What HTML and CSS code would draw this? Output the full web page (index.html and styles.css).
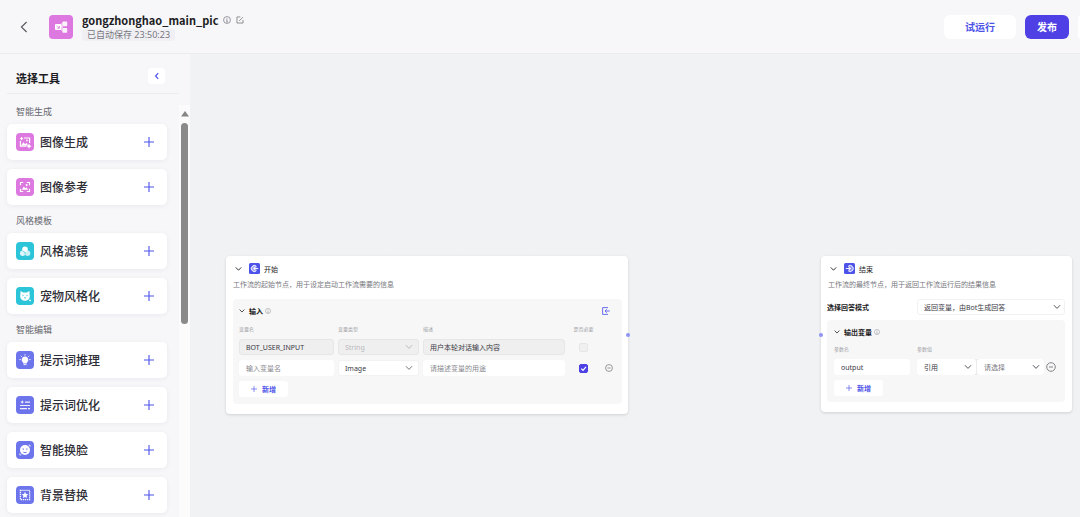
FILE: index.html
```html
<!DOCTYPE html>
<html lang="zh-CN">
<head>
<meta charset="utf-8">
<title>gongzhonghao_main_pic</title>
<link rel="stylesheet" href="styles.css">
</head>
<body>
<svg class="defs" aria-hidden="true">
  <symbol id="chevron" viewBox="0 0 8 8"><path d="M1.2 2.5 4 5.4 6.8 2.5" fill="none" stroke="currentColor" stroke-width="1" stroke-linecap="round" stroke-linejoin="round"/></symbol>
  <symbol id="plus" viewBox="0 0 10 10"><path d="M5 0v10M0 5h10" fill="none" stroke="currentColor" stroke-width="1.1"/></symbol>
  <symbol id="info" viewBox="0 0 10 10"><circle cx="5" cy="5" r="4.3" fill="none" stroke="currentColor" stroke-width=".9"/><path d="M5 4.4v3M4.2 4.5H5M4 7.4h2" fill="none" stroke="currentColor" stroke-width=".9"/><circle cx="5" cy="2.8" r=".6" fill="currentColor"/></symbol>
  <symbol id="minus" viewBox="0 0 10 10"><circle cx="5" cy="5" r="4.3" fill="none" stroke="currentColor" stroke-width=".9"/><path d="M3 5h4" stroke="currentColor" stroke-width=".9"/></symbol>
</svg>

<header class="topbar">
  <button class="back" aria-label="返回"><svg viewBox="0 0 8 12"><path d="M6.6 1 1.4 6l5.2 5" fill="none" stroke="currentColor" stroke-width="1.1"/></svg></button>
  <svg class="logo" viewBox="0 0 24 24"><rect width="24" height="24" rx="4" fill="#dc78df"/><path d="M10 12h4M13 8v8" stroke="#fff" stroke-width=".9" opacity=".8"/><rect x="6" y="9" width="6.4" height="6" rx=".8" fill="#fff"/><rect x="13.4" y="6.4" width="4.8" height="4.8" rx=".8" fill="#fff" opacity=".9"/><rect x="13.4" y="13" width="4.8" height="4.8" rx=".8" fill="#fff" opacity=".9"/><path d="m7.8 10.6 2.4 2.4M10.4 11v2.3H8.2" fill="none" stroke="#dc78df" stroke-width=".8"/></svg>
  <div class="heading">
    <div class="heading-row">
      <h1>gongzhonghao_main_pic</h1>
      <svg class="heading-icon"><use href="#info"/></svg>
      <svg class="heading-icon" viewBox="0 0 10 10"><path d="M5.5 1.2H1.2v7.6h7.6V5M4 6.200l4.800-4.800" fill="none" stroke="currentColor" stroke-width="1"/></svg>
    </div>
    <span class="saved">已自动保存 23:50:23</span>
  </div>
  <div class="actions">
    <button class="btn btn-light">试运行</button>
    <button class="btn btn-primary">发布</button>
    <span class="next-action"></span>
  </div>
</header>

<div class="workspace">
  <aside class="sidebar">
    <div class="sidebar-head">
      <h2>选择工具</h2>
      <button class="collapse" aria-label="收起"><svg viewBox="0 0 8 8"><path d="M5.2 1.2 2.6 4l2.6 2.8" fill="none" stroke="currentColor" stroke-width="1.2"/></svg></button>
    </div>
    <div class="sidebar-body">
      <div class="tools">
        <h3>智能生成</h3>
        <ul>
          <li><svg class="tool-icon pink" viewBox="0 0 18 18"><path d="M8 5h5.6v5M4.4 8v5.2h5.8" fill="none" stroke="#fff" stroke-width="1.2"/><path d="m5 12.600 2.400-3.400 1.800 2 1.600-1.400 1 2.800z" fill="#fff"/><path d="m5.6 3.600.7 1.300 1.300.7-1.300.7-.7 1.300-.7-1.300-1.300-.7 1.300-.7zM13 10.600l.9 1.700 1.700.9-1.700.9-.9 1.700-.9-1.700-1.700-.9 1.700-.9z" fill="#fff"/><circle cx="11" cy="7.400" r=".9" fill="#fff"/></svg><span>图像生成</span><button aria-label="添加图像生成"><svg><use href="#plus"/></svg></button></li>
          <li><svg class="tool-icon pink" viewBox="0 0 18 18"><path d="M4.500 7.200V4.500h2.700M10.800 4.500h2.700v2.700M13.500 10.800v2.700h-2.700M7.200 13.500H4.500v-2.700" fill="none" stroke="#fff" stroke-width="1.200"/><path d="m5.800 11.800 2-3.200 1.500 1.600 1.200-1 1.700 2.600z" fill="#fff"/><circle cx="10.600" cy="7" r="1" fill="#fff"/></svg><span>图像参考</span><button aria-label="添加图像参考"><svg><use href="#plus"/></svg></button></li>
        </ul>
        <h3>风格模板</h3>
        <ul>
          <li><svg class="tool-icon cyan" viewBox="0 0 18 18"><circle cx="9" cy="7.200" r="2.800" fill="#fff"/><circle cx="6.700" cy="11.300" r="2.700" fill="#fff" opacity=".85"/><circle cx="11.600" cy="11.300" r="2.700" fill="#fff" opacity=".75"/><path d="m6.600 9.200 2.600 1.200-.2 2" fill="none" stroke="#2bc4d8" stroke-width=".7"/></svg><span>风格滤镜</span><button aria-label="添加风格滤镜"><svg><use href="#plus"/></svg></button></li>
          <li><svg class="tool-icon cyan" viewBox="0 0 18 18"><path d="M4.600 4l2.600 1.400h3.600L13.400 4l.4 5.500c0 2.600-2 4.200-4.800 4.200s-4.800-1.600-4.800-4.200z" fill="#fff"/><path d="M7 7.800v1.400M11 7.800v1.400M8 11.200l1-.7 1 .7" fill="none" stroke="#2bc4d8" stroke-width=".9"/><circle cx="14" cy="13.300" r=".9" fill="#fff"/></svg><span>宠物风格化</span><button aria-label="添加宠物风格化"><svg><use href="#plus"/></svg></button></li>
        </ul>
        <h3>智能编辑</h3>
        <ul>
          <li><svg class="tool-icon violet" viewBox="0 0 18 18"><path d="M9 5.400a3.300 3.300 0 0 1 1.900 6v1.200H7.100v-1.200A3.300 3.300 0 0 1 9 5.400z" fill="#fff"/><path d="M7.600 13.600h2.800M9 3.200v1.400M4.800 4.800l1 1M13.200 4.800l-1 1M3.400 8.600h1.400M13.200 8.600h1.400" stroke="#fff" stroke-width=".9"/></svg><span>提示词推理</span><button aria-label="添加提示词推理"><svg><use href="#plus"/></svg></button></li>
          <li><svg class="tool-icon violet" viewBox="0 0 18 18"><path d="M9 6.200h5M4 9.500h10M4 12.700h7M12 12.700h2" stroke="#fff" stroke-width="1.200" opacity=".9"/><path d="m6.200 4.200.6 1.200 1.300.6-1.300.6-.6 1.300-.6-1.300L4.300 6l1.300-.6z" fill="#fff"/></svg><span>提示词优化</span><button aria-label="添加提示词优化"><svg><use href="#plus"/></svg></button></li>
          <li><svg class="tool-icon violet" viewBox="0 0 18 18"><circle cx="9" cy="9" r="5" fill="#fff"/><path d="M7.200 7.300v1.500M10.900 7.300v1.500M7.400 11.200q1.600 1.100 3.200 0" fill="none" stroke="#6d75ec" stroke-width="1"/><path d="M12.600 4.200h1.500v1.500M3.800 12.400v1.500h1.500" fill="none" stroke="#fff" stroke-width=".8"/></svg><span>智能换脸</span><button aria-label="添加智能换脸"><svg><use href="#plus"/></svg></button></li>
          <li><svg class="tool-icon violet" viewBox="0 0 18 18"><rect x="4.400" y="4.400" width="9.200" height="9.200" fill="none" stroke="#fff" stroke-width="1.300" stroke-dasharray="1.200 .8"/><path d="m9 5.800 1 2.100 2.300.3-1.700 1.600.4 2.300-2-1.100-2 1.100.4-2.300-1.700-1.600L8 7.900z" fill="#fff"/></svg><span>背景替换</span><button aria-label="添加背景替换"><svg><use href="#plus"/></svg></button></li>
        </ul>
      </div>
      <div class="scrollbar" aria-hidden="true"><svg viewBox="0 0 8 6"><path d="M4 0 8 5.500H0z" fill="#868686"/></svg><span class="thumb"></span></div>
    </div>
  </aside>

  <main class="canvas">
    <section class="node node-start">
      <header class="node-head">
        <svg class="chev"><use href="#chevron"/></svg>
        <svg class="node-icon" viewBox="0 0 11 11"><rect width="11" height="11" rx="1.500" fill="#4d53e8"/><path d="M7.400 3.300A3 3 0 1 0 7.400 7.700" fill="#fff" fill-opacity=".45" stroke="#fff" stroke-width="1"/><path d="M9.300 5.500H4.600M6.400 3.900 4.700 5.500l1.700 1.600" fill="none" stroke="#fff" stroke-width=".9"/></svg>
        <h2>开始</h2>
      </header>
      <p class="desc">工作流的起始节点，用于设定启动工作流需要的信息</p>
      <div class="panel">
        <div class="panel-head">
          <svg class="chev"><use href="#chevron"/></svg><h3>输入</h3><svg class="tip"><use href="#info"/></svg>
          <button class="import" aria-label="导入"><svg viewBox="0 0 8 8"><path d="M6 .6H.6v6.800H6" fill="none" stroke="currentColor" stroke-width="1"/><path d="M7.800 4H3M4.800 2.200 3 4l1.800 1.800" fill="none" stroke="currentColor" stroke-width="1"/></svg></button>
        </div>
        <div class="grid grid-start labels"><span>变量名</span><span>变量类型</span><span>描述</span><span class="center">是否必要</span></div>
        <div class="grid grid-start">
          <input class="field off" aria-label="变量名" value="BOT_USER_INPUT" disabled>
          <div class="select"><select class="field off faint" aria-label="变量类型" disabled><option>String</option></select><svg><use href="#chevron"/></svg></div>
          <input class="field off" aria-label="描述" value="用户本轮对话输入内容" disabled>
          <label class="check"><input type="checkbox" aria-label="是否必要" disabled></label>
        </div>
        <div class="grid grid-start">
          <input class="field" aria-label="变量名" placeholder="输入变量名">
          <div class="select"><select class="field outlined" aria-label="变量类型"><option>Image</option></select><svg><use href="#chevron"/></svg></div>
          <input class="field" aria-label="描述" placeholder="请描述变量的用途">
          <label class="check"><input type="checkbox" aria-label="是否必要" checked><svg viewBox="0 0 9 9"><path d="M2.200 4.600 4 6.300l3-3.500" fill="none" stroke="#fff" stroke-width="1.200"/></svg></label>
          <button class="remove" aria-label="删除"><svg><use href="#minus"/></svg></button>
        </div>
        <button class="add"><svg><use href="#plus"/></svg>新增</button>
      </div>
      <span class="port port-out"></span>
    </section>

    <section class="node node-end">
      <header class="node-head">
        <svg class="chev"><use href="#chevron"/></svg>
        <svg class="node-icon" viewBox="0 0 11 11"><rect width="11" height="11" rx="1.500" fill="#4d53e8"/><path d="M4.200 3.300A3 3 0 1 1 4.200 7.700" fill="#fff" fill-opacity=".35" stroke="#fff" stroke-width="1"/><path d="M1.800 5.500h4.800M5 3.900l1.700 1.600L5 7.100" fill="none" stroke="#fff" stroke-width=".9"/></svg>
        <h2>结束</h2>
      </header>
      <p class="desc">工作流的最终节点，用于返回工作流运行后的结果信息</p>
      <div class="mode">
        <label for="mode">选择回答模式</label>
        <div class="select"><select id="mode" class="field outlined"><option>返回变量，由Bot生成回答</option></select><svg><use href="#chevron"/></svg></div>
      </div>
      <div class="panel">
        <div class="panel-head">
          <svg class="chev"><use href="#chevron"/></svg><h3>输出变量</h3><svg class="tip"><use href="#info"/></svg>
        </div>
        <div class="grid grid-end labels"><span>参数名</span><span>参数值</span></div>
        <div class="grid grid-end">
          <input class="field" aria-label="参数名" value="output">
          <div class="pair">
            <div class="select"><select class="field" aria-label="参数值类型"><option>引用</option></select><svg><use href="#chevron"/></svg></div>
            <div class="select"><select class="field muted" aria-label="参数值"><option>请选择</option></select><svg><use href="#chevron"/></svg></div>
          </div>
          <button class="remove" aria-label="删除"><svg><use href="#minus"/></svg></button>
        </div>
        <button class="add"><svg><use href="#plus"/></svg>新增</button>
      </div>
      <span class="port port-in"></span>
    </section>
  </main>
</div>
</body>
</html>
```

FILE: styles.css
```css
* { box-sizing: border-box; }

body {
  margin: 0;
  height: 100vh;
  display: flex;
  flex-direction: column;
  overflow: hidden;
  font-family: "Noto Sans", "Noto Sans CJK SC", sans-serif;
  color: #1d1c23;
  background: #f7f7fa;
}

h1, h2, h3, p, ul { margin: 0; padding: 0; }
ul { list-style: none; }
button { border: 0; padding: 0; background: none; font-family: inherit; cursor: pointer; }
input, select { font-family: inherit; margin: 0; }
svg { display: block; flex: none; }
.defs { position: absolute; width: 0; height: 0; }

/* Top bar */
.topbar {
  flex: none;
  display: flex;
  align-items: center;
  height: 54px;
  padding-left: 20px;
  border-bottom: 1px solid #ececef;
}
.back { color: #55555c; }
.back svg { width: 8px; height: 12px; }
.logo { width: 24px; height: 24px; margin: 0 9px 0 21px; }
.heading { display: flex; flex-direction: column; align-items: flex-start; gap: 1px; }
.heading-row { display: flex; align-items: center; gap: 5px; height: 16px; }
.heading h1 { font-family: "Noto Sans CJK SC", sans-serif; font-size: 11px; line-height: 16px; font-weight: 600; }
.heading-icon { width: 8px; height: 8px; color: #77777e; }
.saved {
  padding: 0 5px;
  border-radius: 3px;
  background: #f0f0f4;
  color: #77777e;
  font-size: 9px;
  line-height: 12px;
}
.actions { margin-left: auto; display: flex; align-items: center; gap: 9px; }
.btn { height: 24px; border-radius: 6px; font-size: 10px; font-weight: 600; }
.btn-light { width: 72px; background: #fff; color: #4d53e8; }
.btn-primary { width: 44px; background: #4e40e5; color: #fff; }
.next-action { width: 2px; height: 22px; border-radius: 4px 0 0 4px; background: #fff; }

/* Sidebar */
.workspace { flex: 1; min-height: 0; display: flex; }
.sidebar { flex: none; width: 190px; display: flex; flex-direction: column; }
.sidebar-head {
  flex: none;
  display: flex;
  align-items: center;
  justify-content: space-between;
  height: 40px;
  margin: 0 11px 0 7px;
  padding: 4px 14px 0 9px;
  border-bottom: 1px solid #ececef;
}
.sidebar-head h2 { font-size: 11px; font-weight: 600; padding-top: 6px; line-height: 16px; }
.collapse { width: 17px; height: 16px; border-radius: 4px; background: #fff; color: #4d53e8; display: flex; align-items: center; justify-content: center; }
.collapse svg { width: 8px; height: 8px; }
.sidebar-body { flex: 1; min-height: 0; display: flex; overflow: hidden; }
.tools { flex: 1; padding: 2px 12px 0 7px; }
.tools h3 { padding: 4px 9px 0; font-size: 9px; line-height: 24px; font-weight: 400; color: #66666d; }
.tools ul { display: flex; flex-direction: column; gap: 9px; }
.tools li {
  display: flex;
  align-items: center;
  gap: 6px;
  height: 36px;
  padding: 0 13px 0 9px;
  border-radius: 5px;
  background: #fff;
  box-shadow: 0 1px 5px rgba(20, 20, 50, .06);
  font-size: 12px;
  font-weight: 500;
  color: #2e2d36;
}
.tools li button { margin-left: auto; color: #4d53e8; }
.tools li button svg { width: 10px; height: 10px; }
.tool-icon { width: 18px; height: 18px; border-radius: 4px; }
.pink { background: #dc78df; }
.cyan { background: #2bc4d8; }
.violet { background: #6d75ec; }
.scrollbar { width: 11px; margin-top: 11px; background: #fbfbfb; display: flex; flex-direction: column; align-items: center; gap: 6px; padding-top: 6px; }
.scrollbar svg { width: 8px; height: 6px; }
.thumb { width: 7px; height: 201px; border-radius: 4px; background: #8a8a8a; }

/* Canvas and nodes */
.canvas {
  flex: 1;
  position: relative;
  overflow: hidden;
  background: #f1f2f4 radial-gradient(circle, #eff0f2 1px, transparent 1px) 0 0 / 9px 9px;
}
.node {
  position: absolute;
  top: 202px;
  border-radius: 4px;
  background: #fff;
  box-shadow: 0 1px 3px rgba(0, 0, 0, .14);
  font-size: 7px;
}
.node-start { left: 36px; width: 402px; padding: 6px 6px 10px 7px; }
.node-end { left: 631px; width: 251px; padding: 6px 7px 10px 6px; }
.node-head { display: flex; align-items: center; height: 13px; padding-left: 2px; }
.node-end .node-head { padding-left: 3px; }
.chev { width: 7px; height: 8px; color: #1d1c23; }
.node-icon { width: 11px; height: 11px; margin: 0 4px 0 7px; }
.node-head h2 { font-size: 7px; font-weight: 400; }
.desc { line-height: 10px; padding: 5px 0 9px; color: #77777e; }
.node-end .desc { padding-left: 1px; }
.panel { padding: 6px 6px 7px; border-radius: 4px; background: #f7f7f7; }
.node-end .panel { padding: 6px 7px; }
.panel-head { display: flex; align-items: center; height: 12px; }
.panel-head .chev { width: 6px; height: 8px; margin-right: 4px; }
.panel-head h3 { font-size: 7px; font-weight: 700; margin-right: 2px; }
.tip { width: 6px; height: 6px; color: #9a9aa0; }
.import { margin-left: auto; margin-right: 6px; color: #6a6fee; }
.import svg { width: 8px; height: 8px; }
.grid { display: grid; align-items: center; column-gap: 4px; margin-bottom: 5px; }
.grid-start { grid-template-columns: 95fr 81fr 142fr 29px 14px; }
.grid-end { grid-template-columns: 83fr 127fr 14px; column-gap: 0; }
.grid-end > .field { width: auto; margin-right: 7px; min-width: 0; }
.grid-end .remove { justify-self: center; }
.labels { height: 12px; margin: 5px 0; font-size: 5px; color: #a2a2a8; }
.node-end .labels { margin: 4px 0 5px; }
.center { text-align: center; white-space: nowrap; }
.field {
  display: block;
  width: 100%;
  height: 16px;
  padding: 0 6px;
  border: 1px solid transparent;
  border-radius: 3px;
  background: #fff;
  color: #3a3943;
  font-size: 7px;
  appearance: none;
  outline: 0;
  opacity: 1;
}
.field::placeholder { color: #88888e; }
.outlined { border-color: #f2f2f3; }
.off { background: #efefef; border-color: #e6e6e6; }
.faint { color: #b9b9bd; }
.muted { color: #77777e; }
.select { position: relative; min-width: 0; }
.select svg { position: absolute; right: 6px; top: 4px; width: 8px; height: 8px; color: #77777e; pointer-events: none; }
.node-end .select svg { right: 4px; color: #55555c; }
.select .faint + svg { color: #b9b9bd; }
.check { position: relative; justify-self: center; }
.check input { display: block; width: 9px; height: 9px; appearance: none; border: 1px solid #e6e6e6; border-radius: 2px; background: #f0f0f0; }
.check input:checked { border-color: #4d40e5; background: #4d40e5; }
.check svg { position: absolute; inset: 0; width: 9px; height: 9px; }
.remove { justify-self: center; color: #77777e; }
.remove svg { width: 8px; height: 8px; }
.node-end .remove svg { width: 10px; height: 10px; }
.add {
  display: flex;
  align-items: center;
  justify-content: center;
  gap: 5px;
  width: 49px;
  height: 16px;
  border-radius: 3px;
  background: #fff;
  color: #4d53e8;
  font-size: 7px;
  font-weight: 600;
}
.add svg { width: 6px; height: 6px; }
.mode { display: grid; grid-template-columns: 90px 1fr; align-items: center; margin-bottom: 5px; }
.mode label { font-weight: 700; }
.pair { display: grid; grid-template-columns: 59fr 67fr; gap: 1px; background: #ececee; border-radius: 3px; }
.port { position: absolute; top: 77px; width: 4px; height: 4px; border-radius: 50%; background: #8f94f2; }
.port-out { right: -2px; }
.port-in { left: -2px; }
```
